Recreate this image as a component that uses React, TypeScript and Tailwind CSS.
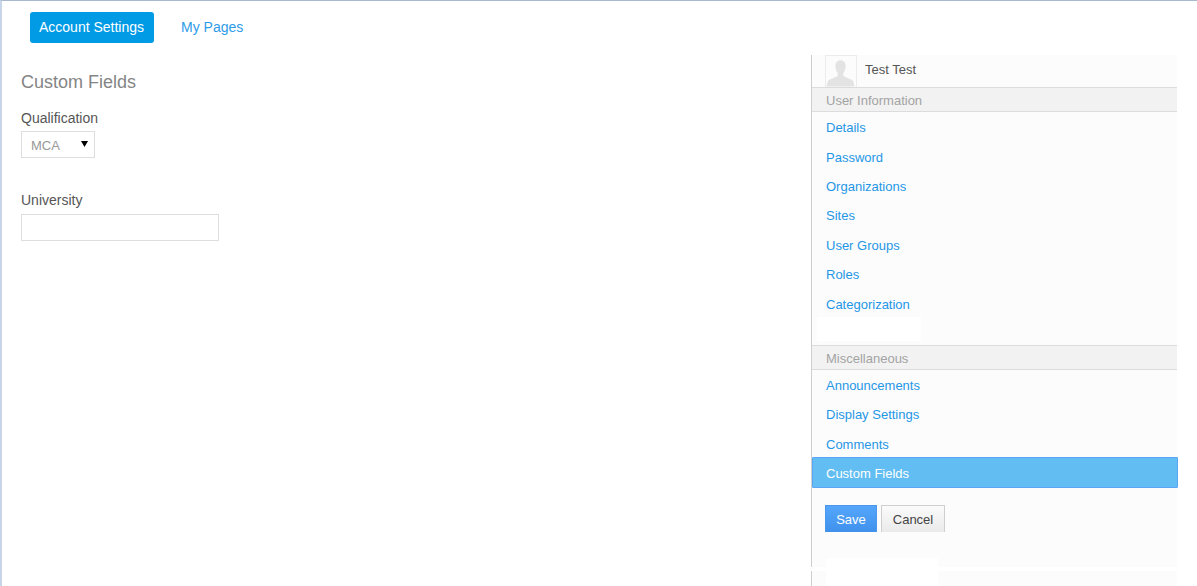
const userLinks = ["Details", "Password", "Organizations", "Sites", "User Groups", "Roles", "Categorization"];
const miscLinks = ["Announcements", "Display Settings", "Comments"];

function SideLink({ label }: { label: string }) {
  return (
    <a className="flex h-[29.4px] items-center pl-[14px] text-[13px] text-[#1f97e6]">
      {label}
    </a>
  );
}

function SideHeading({ label, offset }: { label: string; offset: string }) {
  return (
    <div className={`flex h-[25px] items-center border-y border-[#dcdcdc] bg-[#f2f2f2] pl-[14px] text-[13px] text-[#a3a3a3] ${offset}`}>
      {label}
    </div>
  );
}

export default function App() {
  return (
    <div className="flex h-[586px] flex-col overflow-hidden border-t border-l-2 border-t-[#a9b8cf] border-l-[#c8d4e8] bg-white font-['Liberation_Sans',Arial,sans-serif] text-sm">
      <nav className="flex h-[54px] shrink-0 items-start pt-[11px] pl-[28px]">
        <a className="flex h-[31px] w-[124px] items-center justify-center rounded-[3px] bg-[#009ae5] pr-[1px] pb-[2px] text-white">
          Account Settings
        </a>
        <a className="ml-[27px] flex h-[31px] items-center pb-[2px] text-[#2e9be8]">My Pages</a>
      </nav>

      <div className="flex min-h-0 flex-1">
        <main className="flex-1 pt-[16px] pl-[19px]">
          <h2 className="text-lg leading-[22px] text-[#858585]">Custom Fields</h2>
          <label className="mt-[16px] block leading-[18px] text-[#555]">Qualification</label>
          <div className="mt-[4px] flex h-[27px] w-[74px] items-center justify-between border border-[#dedede] pr-[6px] pl-[9px] text-[13px] text-[#999]">
            <span className="pt-[3px]">MCA</span>
            <svg width="7" height="6" viewBox="0 0 7 6" className="mb-[2px] fill-black">
              <path d="M0 0h7L3.5 6z" />
            </svg>
          </div>
          <label className="mt-[33px] block leading-[18px] text-[#555]">University</label>
          <input className="mt-[5px] block h-[27px] w-[198px] border border-[#dedede]" />
        </main>

        <aside className="mr-[20px] flex w-[366px] shrink-0 flex-col border-l border-[#cfcfcf] bg-[#fcfcfc]">
          <div className="flex h-[32px] items-center pl-[13px]">
            <div className="h-[32px] w-[32px] overflow-hidden border-x border-t border-[#ececec] bg-[#fcfcfc]">
              <svg viewBox="0 0 32 32" className="h-full w-full fill-[#e3e3e3]">
                <path d="M15.500 4c-3.500 0-5.500 2.500-5.500 6 0 3 1 5.500 2.500 7.500v3c-2 2-8 3-10.500 5.500l-1.500 6h30l-1.500-6c-2.500-2.500-8.500-3.500-10.500-5.500v-3c1.500-2 2.500-4.500 2.500-7.500 0-3.500-2-6-5.500-6z" />
              </svg>
            </div>
            <span className="ml-[8px] pb-[2px] text-[13px] text-[#555]">Test Test</span>
          </div>
          <SideHeading label="User Information" offset="pt-[3px]" />
          <div className="pt-[1.8px]">
            {userLinks.map((l) => <SideLink key={l} label={l} />)}
          </div>
          <div className="mt-[-2.6px] ml-[5px] h-[24px] w-[104px] bg-white" />
          <div className="h-[4px]" />
          <SideHeading label="Miscellaneous" offset="pt-[4px]" />
          <div className="pt-[1.6px]">
            {miscLinks.map((l) => <SideLink key={l} label={l} />)}
          </div>
          <a className="-mt-[2.8px] -mr-px flex h-[31px] items-center rounded-[1px] border border-[#5aa5f7] bg-[#61bdf2] pt-[3px] pl-[13px] text-[13px] text-white">
            Custom Fields
          </a>
          <div className="mt-[17px] flex gap-[4px] pl-[13px]">
            <button className="h-[27px] w-[52px] border border-b-0 border-[#4a97ec] bg-gradient-to-b from-[#55a6fb] to-[#3f91ec] pt-[3px] text-[13px] text-white">
              Save
            </button>
            <button className="h-[27px] w-[64px] border border-b-0 border-[#cfcfcf] bg-gradient-to-b from-[#fbfbfb] to-[#eaeaea] pt-[3px] text-[13px] text-[#444]">
              Cancel
            </button>
          </div>
          <div className="mt-[26px] ml-[14px] h-[9px] w-[112px] bg-white" />
          <div className="-ml-px h-[4px] w-[366px] bg-white" />
          <div className="ml-[14px] w-[112px] flex-1 bg-white" />
        </aside>
      </div>
    </div>
  );
}
